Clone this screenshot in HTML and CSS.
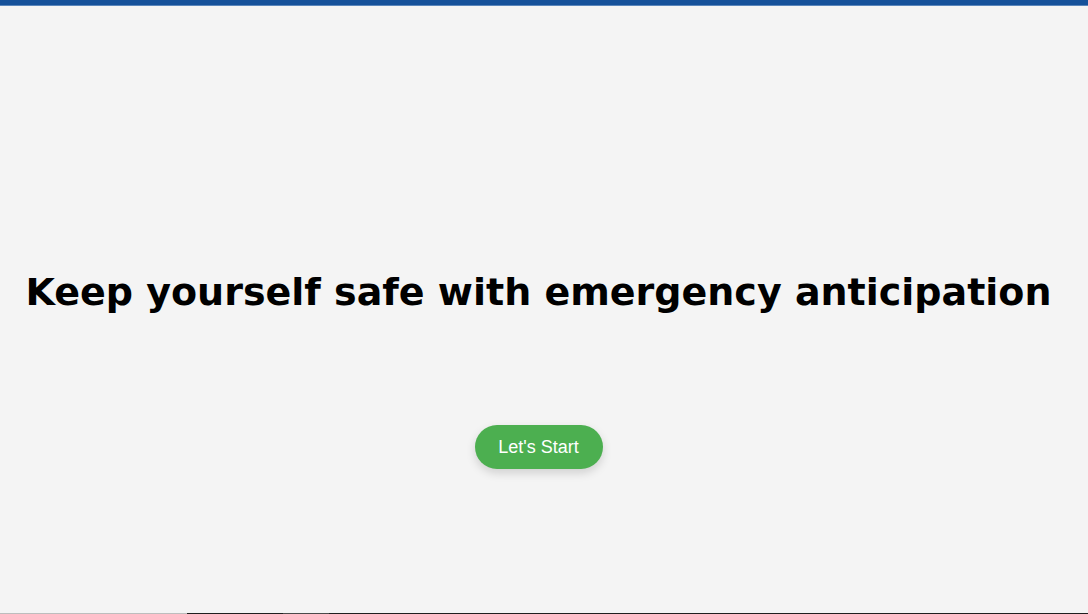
FILE: index.html
```html
<!DOCTYPE html>
<html lang="en">
<head>
<meta charset="utf-8">
<title>Emergency Anticipation</title>
<link rel="stylesheet" href="styles.css">
</head>
<body>
<div class="page">
  <div class="topbar"></div>
  <main class="hero">
    <h1 class="headline">Keep yourself safe with emergency anticipation</h1>
    <button class="start-btn" type="button">Let's Start</button>
  </main>
  <div class="bottom-strip">
    <span class="seg seg-light"></span>
    <span class="seg seg-dark1"></span>
    <span class="seg seg-mid"></span>
    <span class="seg seg-dark2"></span>
  </div>
</div>
</body>
</html>
```
FILE: styles.css
```css
html, body {
  margin: 0;
  padding: 0;
  height: 100%;
}
body {
  background: #f4f4f4;
  font-family: "Liberation Sans", Arial, sans-serif;
  overflow: hidden;
}
.page {
  display: flex;
  flex-direction: column;
  height: 614px;
}
.topbar {
  height: 5px;
  background: #15519a;
  border-bottom: 1px solid #5a86bb;
  flex: none;
}
.hero {
  flex: 1;
  display: flex;
  flex-direction: column;
  align-items: center;
  padding-right: 11px;
}
.headline {
  margin: 263px 0 0;
  font-family: "DejaVu Sans", sans-serif;
  font-weight: 700;
  font-size: 38px;
  line-height: 46px;
  color: #000;
  white-space: nowrap;
  text-align: center;
}
.start-btn {
  margin-top: 110px;
  width: 128px;
  height: 44px;
  border: none;
  border-radius: 22px;
  background: #4caf50;
  color: #fff;
  font-family: "Liberation Sans", Arial, sans-serif;
  font-size: 18px;
  padding: 0;
  box-shadow: 0 4px 10px rgba(0, 0, 0, 0.15);
  cursor: pointer;
}
.bottom-strip {
  display: flex;
  height: 1px;
  flex: none;
}
.seg { display: block; height: 1px; }
.seg-light { width: 187px; background: #bdbdbd; }
.seg-dark1 { width: 96px; background: #1f1f1f; }
.seg-mid { width: 46px; background: #4a4a4a; }
.seg-dark2 { flex: 1; background: #1f1f1f; }
```
